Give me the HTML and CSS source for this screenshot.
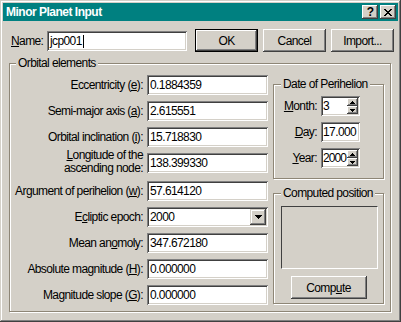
FILE: index.html
```html
<!DOCTYPE html>
<html>
<head>
<meta charset="utf-8">
<link rel="stylesheet" href="styles.css">
</head>
<body>
<div class="window">
  <div class="titlebar">
    <span class="title">Minor Planet Input</span>
    <div class="tbtns">
      <span class="tbtn help">?</span>
      <span class="tbtn"><svg width="8" height="7" viewBox="0 0 8 7" shape-rendering="crispEdges"><path d="M0 0h2v1H0zM6 0h2v1H6zM1 1h2v1H1zM5 1h2v1H5zM2 2h4v1H2zM3 3h2v1H3zM2 4h4v1H2zM1 5h2v1H1zM5 5h2v1H5zM0 6h2v1H0zM6 6h2v1H6z" fill="#000"/></svg></span>
    </div>
  </div>
  <div class="toprow">
    <span class="name-lbl"><u>N</u>ame:</span>
    <div class="edit name-edit">jcp001<span class="caret"></span></div>
    <div class="btns">
      <button class="btn default">OK</button>
      <button class="btn">Cancel</button>
      <button class="btn">Import...</button>
    </div>
  </div>
  <div class="group orbital">
    <span class="legend">Orbital elements</span>
    <div class="orb-body">
      <div class="fields">
        <span class="lbl">Eccentricity (<u>e</u>):</span><div class="edit">0.1884359</div>
        <span class="lbl">Semi-major axis (<u>a</u>):</span><div class="edit">2.615551</div>
        <span class="lbl">Orbital inclination (<u>i</u>):</span><div class="edit">15.718830</div>
        <span class="lbl two">&nbsp;<u>L</u>ongitude of the<br>ascending node:</span><div class="edit top">138.399330</div>
        <span class="lbl">Argument of perihelion (<u>w</u>):</span><div class="edit">57.614120</div>
        <span class="lbl">E<u>c</u>liptic epoch:</span>
        <div class="combo"><div class="val">2000</div><div class="dd"><svg width="7" height="4" viewBox="0 0 7 4" shape-rendering="crispEdges"><path d="M0 0h7v1H0zM1 1h5v1H1zM2 2h3v1H2zM3 3h1v1H3z" fill="#000"/></svg></div></div>
        <span class="lbl">Mean an<u>o</u>moly:</span><div class="edit">347.672180</div>
        <span class="lbl">Absolute magnitude (<u>H</u>):</span><div class="edit">0.000000</div>
        <span class="lbl">Magnitude slope (<u>G</u>):</span><div class="edit">0.000000</div>
      </div>
      <div class="rightcol">
        <div class="group date">
          <span class="legend small">Date of Perihelion</span>
          <div class="date-grid">
            <span class="lbl"><u>M</u>onth:</span>
            <div class="spinfield"><div class="val">3</div><div class="spin"><span class="sb"><svg width="5" height="3" viewBox="0 0 5 3" shape-rendering="crispEdges"><path d="M2 0h1v1H2zM1 1h3v1H1zM0 2h5v1H0z" fill="#000"/></svg></span><span class="sb"><svg width="5" height="3" viewBox="0 0 5 3" shape-rendering="crispEdges"><path d="M0 0h5v1H0zM1 1h3v1H1zM2 2h1v1H2z" fill="#000"/></svg></span></div></div>
            <span class="lbl"><u>D</u>ay:</span>
            <div class="edit">17.000</div>
            <span class="lbl"><u>Y</u>ear:</span>
            <div class="spinfield"><div class="val">2000</div><div class="spin"><span class="sb"><svg width="5" height="3" viewBox="0 0 5 3" shape-rendering="crispEdges"><path d="M2 0h1v1H2zM1 1h3v1H1zM0 2h5v1H0z" fill="#000"/></svg></span><span class="sb"><svg width="5" height="3" viewBox="0 0 5 3" shape-rendering="crispEdges"><path d="M0 0h5v1H0zM1 1h3v1H1zM2 2h1v1H2z" fill="#000"/></svg></span></div></div>
          </div>
        </div>
        <div class="group computed">
          <span class="legend small">Computed position</span>
          <div class="comp-box"></div>
          <button class="btn compute">Comp<u>u</u>te</button>
        </div>
      </div>
    </div>
  </div>
</div>
</body>
</html>
```
FILE: styles.css
```css
* { box-sizing: border-box; }
body {
  margin: 0;
  background: #d4d0c8;
  font-family: "Liberation Sans", Arial, sans-serif;
  font-size: 12px;
  letter-spacing: -0.6px;
  color: #000;
}
.window {
  width: 401px;
  height: 322px;
  background: #d4d0c8;
  box-shadow: inset -1px -1px #404040, inset 1px 1px #d4d0c8, inset -2px -2px #808080, inset 2px 2px #fff;
  padding: 3px;
  display: flex;
  flex-direction: column;
}
.titlebar {
  height: 18px;
  flex: none;
  background: #008080;
  display: flex;
  align-items: center;
  justify-content: space-between;
  padding: 0 2px 0 3px;
  color: #fff;
  font-weight: bold;
  letter-spacing: -0.5px;
}
.tbtns { display: flex; gap: 2px; }
.tbtn {
  width: 16px;
  height: 14px;
  background: #d4d0c8;
  box-shadow: inset -1px -1px #404040, inset 1px 1px #fff, inset -2px -2px #808080;
  display: flex;
  align-items: center;
  justify-content: center;
  color: #000;
  letter-spacing: 0;
}
.tbtn.help { font-size: 12px; line-height: 14px; padding-left: 1px; }
.tbtn svg { display: block; }
.toprow {
  margin-top: 8px;
  height: 23px;
  flex: none;
  display: flex;
  align-items: center;
  padding-left: 8px;
}
.name-lbl { width: 36px; }
.edit {
  height: 20px;
  background: #fff;
  box-shadow: inset 1px 1px #808080, inset -1px -1px #fff, inset 2px 2px #404040, inset -2px -2px #d4d0c8;
  padding: 0 2px 0 3px;
  line-height: 20px;
  white-space: nowrap;
  overflow: hidden;
}
.name-edit { width: 140px; margin-top: 1px; display: flex; align-items: center; }
.caret { display: inline-block; width: 1px; height: 13px; background: #000; margin-left: 1px; }
.btns { display: flex; gap: 5px; margin-left: 8px; }
.btn {
  width: 63px;
  height: 23px;
  background: #d4d0c8;
  border: none;
  padding: 0;
  font: inherit;
  letter-spacing: inherit;
  color: #000;
  box-shadow: inset -1px -1px #404040, inset 1px 1px #fff, inset -2px -2px #808080, inset 2px 2px #d4d0c8;
}
.btn.default {
  box-shadow: inset 0 0 0 1px #000, inset -2px -2px #404040, inset 2px 2px #fff, inset -3px -3px #808080;
}
.group {
  position: relative;
  border: 1px solid #8e8676;
  box-shadow: inset 1px 1px #fff, 1px 1px #fff;
}
.legend {
  position: absolute;
  top: -8px;
  left: 6px;
  background: #d4d0c8;
  padding: 0 2px;
  line-height: 14px;
  white-space: nowrap;
}
.legend.small { left: 7px; }
.orbital {
  margin: 11px 0 0 6px;
  width: 382px;
  height: 249px;
  flex: none;
}
.orb-body { display: flex; padding-top: 11px; }
.fields {
  display: grid;
  grid-template-columns: 133px 121px;
  grid-template-rows: 20px 20px 20px 22px 20px 20px 20px 20px 20px;
  column-gap: 4px;
  row-gap: 6px;
  align-items: center;
}
.lbl { text-align: right; white-space: nowrap; }
.lbl.two { align-self: start; margin-top: -4px; line-height: 13px; }
.edit.top { align-self: start; }
.combo {
  height: 20px;
  display: flex;
  padding: 2px;
  background: #fff;
  box-shadow: inset 1px 1px #808080, inset -1px -1px #fff, inset 2px 2px #404040, inset -2px -2px #d4d0c8;
}
.val { flex: 1; background: #fff; line-height: 16px; padding-left: 1px; white-space: nowrap; overflow: hidden; }
.dd {
  width: 16px;
  height: 16px;
  background: #d4d0c8;
  box-shadow: inset -1px -1px #404040, inset 1px 1px #d4d0c8, inset -2px -2px #808080, inset 2px 2px #fff;
  display: flex;
  align-items: center;
  justify-content: center;
}
.dd svg, .sb svg { display: block; }
.rightcol {
  margin-left: 5px;
  width: 111px;
  display: flex;
  flex-direction: column;
  padding-top: 9px;
}
.date { height: 95px; padding-top: 11px; }
.date-grid {
  display: grid;
  grid-template-columns: 43px 39px;
  grid-auto-rows: 20px;
  column-gap: 4px;
  row-gap: 6px;
  align-items: center;
}
.date-grid .edit { padding-left: 2px; }
.spinfield {
  height: 20px;
  display: flex;
  padding: 2px;
  background: #fff;
  box-shadow: inset 1px 1px #808080, inset -1px -1px #fff, inset 2px 2px #404040, inset -2px -2px #d4d0c8;
}
.spinfield .val { padding-left: 0; letter-spacing: -0.9px; overflow: visible; }
.spin { width: 11px; flex: none; display: flex; flex-direction: column; }
.sb {
  height: 8px;
  background: #d4d0c8;
  box-shadow: inset -1px -1px #404040, inset 1px 1px #fff, inset -2px -2px #808080;
  display: flex;
  align-items: center;
  justify-content: center;
}
.computed {
  margin-top: 14px;
  height: 111px;
  display: flex;
  flex-direction: column;
  align-items: center;
  padding-top: 12px;
}
.comp-box {
  align-self: flex-start;
  margin-left: 7px;
  width: 97px;
  height: 63px;
  border: 1px solid;
  border-color: #404040 #fff #fff #404040;
}
.btn.compute { width: 76px; margin-top: 7px; }
```
